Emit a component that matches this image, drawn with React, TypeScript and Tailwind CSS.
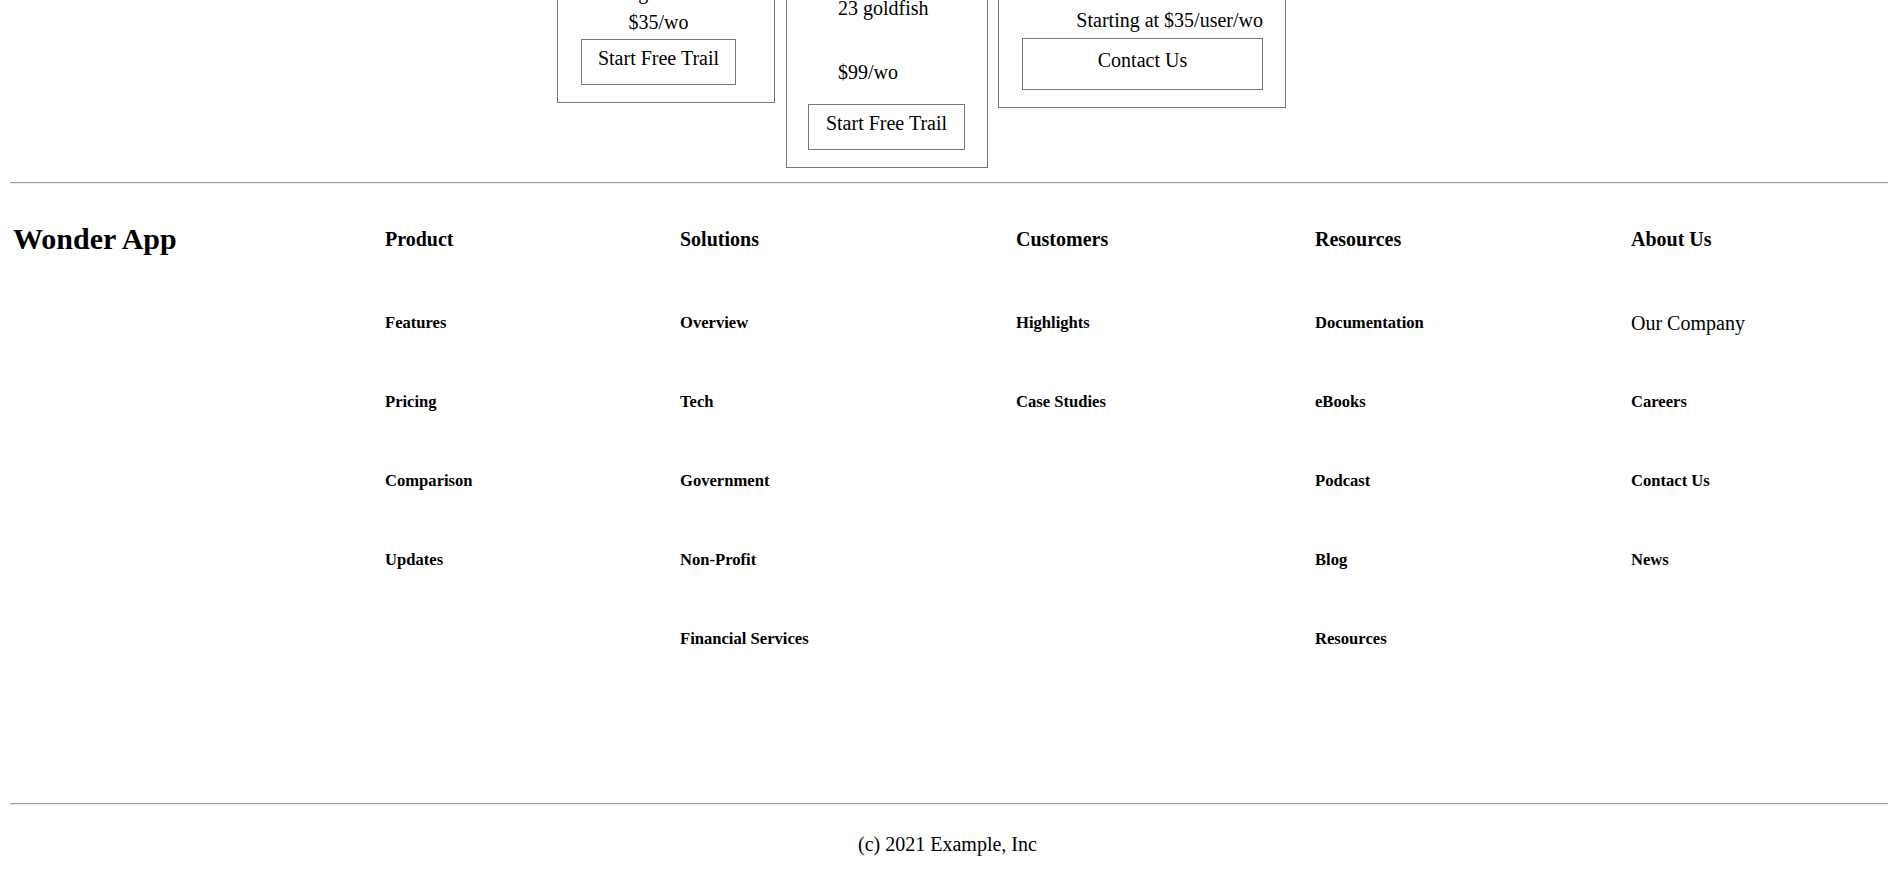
const footerColumns = [
  { title: "Product", links: ["Features", "Pricing", "Comparison", "Updates"] },
  { title: "Solutions", links: ["Overview", "Tech", "Government", "Non-Profit", "Financial Services"] },
  { title: "Customers", links: ["Highlights", "Case Studies"] },
  { title: "Resources", links: ["Documentation", "eBooks", "Podcast", "Blog", "Resources"] },
  { title: "About Us", links: ["Our Company", "Careers", "Contact Us", "News"] },
]

function PlanButton({ label, tall }: { label: string; tall?: boolean }) {
  return (
    <button
      className={
        "block w-full bg-white border border-[#767676] text-[20px] leading-[23px] text-black text-center " +
        (tall ? "pt-[10px] pb-[17px]" : "pt-[7px] pb-[14px]")
      }
    >
      {label}
    </button>
  )
}

function Pricing() {
  return (
    <section className="h-[182px] overflow-hidden">
      <div className="flex items-start pl-[557px]">
        {/* basic */}
        <div className="w-[218px] mt-[-20px] border border-[#767676] pl-[23px] pr-[38px] pb-[17px] text-center">
          <p className="leading-[23px]">10 goldfish</p>
          <p className="mt-[7px] leading-[23px]">$35/wo</p>
          <div className="mt-[5px]">
            <PlanButton label="Start Free Trail" />
          </div>
        </div>

        {/* pro */}
        <div className="w-[202px] ml-[11px] mt-[-20px] border border-[#767676] pl-[21px] pr-[22px] pt-[16px] pb-[17px]">
          <p className="pl-[30px] leading-[23px]">23 goldfish</p>
          <p className="mt-[41px] pl-[30px] leading-[23px]">$99/wo</p>
          <div className="mt-[20px]">
            <PlanButton label="Start Free Trail" />
          </div>
        </div>

        {/* enterprise */}
        <div className="w-[288px] ml-[10px] mt-[-20px] border border-[#767676] pl-[23px] pr-[22px] pt-[28px] pb-[17px] text-right">
          <p className="leading-[23px]">Starting at $35/user/wo</p>
          <div className="mt-[6px]">
            <PlanButton label="Contact Us" tall />
          </div>
        </div>
      </div>
    </section>
  )
}

function Rule() {
  return <hr className="ml-[10px] mr-[2px] h-0 border-0 border-t border-b border-t-[#9a9a9a] border-b-[#eeeeee]" />
}

export default function App() {
  return (
    <div className="h-[879px] overflow-hidden bg-white text-black text-[20px] font-['Liberation_Serif','Times_New_Roman',serif]">
      <Pricing />
      <Rule />

      <footer className="h-[619px] pt-[37px] pl-[13px] grid grid-cols-[372px_295px_336px_299px_316px_1fr] items-start">
        <h2 className="text-[30px] leading-[35px] font-bold">Wonder App</h2>
        {footerColumns.map((col) => (
          <div key={col.title} className="mt-[7px]">
            <h4 className="text-[20px] leading-[23px] font-bold">{col.title}</h4>
            <ul className="mt-[62px]">
              {col.links.map((link) =>
                link === "Our Company" ? (
                  <li key={link} className="h-[79px] text-[20px] leading-[21px]">
                    {link}
                  </li>
                ) : (
                  <li key={link} className="h-[79px] text-[16.6px] leading-[19px] font-bold">
                    {link}
                  </li>
                )
              )}
            </ul>
          </div>
        ))}
      </footer>

      <Rule />
      <p className="mt-[28px] pl-[5px] text-center leading-[23px]">(c) 2021 Example, Inc</p>
    </div>
  )
}
